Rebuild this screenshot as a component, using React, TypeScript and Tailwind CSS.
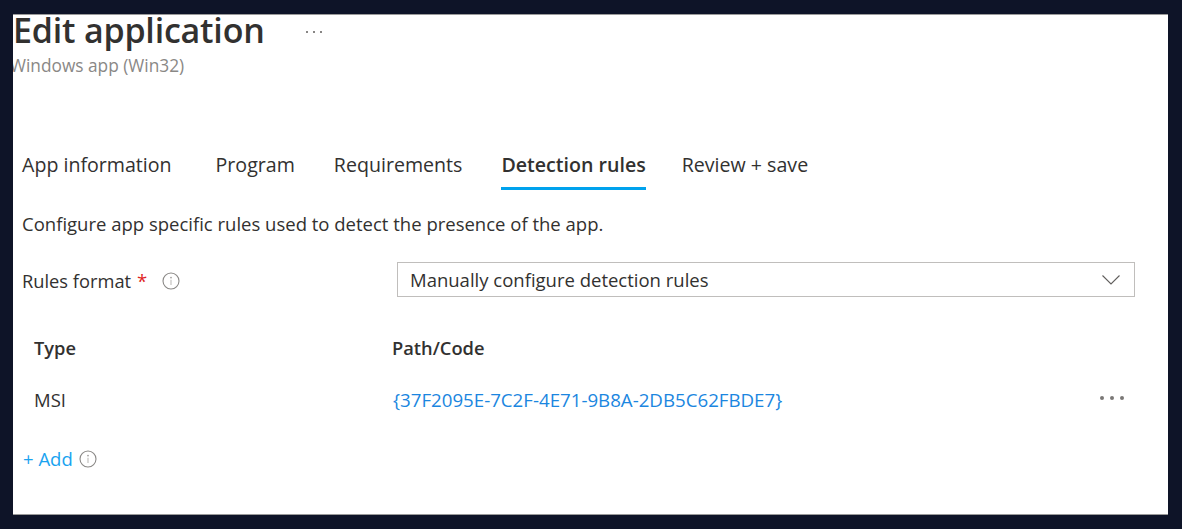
const font = { fontFamily: '"Open Sans", "Noto Sans", sans-serif' };

// tab label + left spacing before it
const tabs: [string, string][] = [
  ["App information", "ml-0"],
  ["Program", "ml-[44px]"],
  ["Requirements", "ml-[39px]"],
  ["Detection rules", "ml-[39px]"],
  ["Review + save", "ml-[36px]"],
];

function InfoIcon({ className = "" }: { className?: string }) {
  return (
    <svg viewBox="0 0 18 18" className={className} fill="none">
      <circle cx="9" cy="9" r="8" stroke="#8a8886" strokeWidth="1.1" />
      <circle cx="9" cy="5.6" r="0.9" fill="#a19f9d" />
      <path d="M9 7.8v5.2" stroke="#c8c6c4" strokeWidth="1.3" />
    </svg>
  );
}

function Dots({ size, gap, color }: { size: string; gap: string; color: string }) {
  return (
    <span className={"flex items-center " + gap}>
      <span className={size + " rounded-full " + color} />
      <span className={size + " rounded-full " + color} />
      <span className={size + " rounded-full " + color} />
    </span>
  );
}

export default function App() {
  return (
    <div className="min-h-[529px] bg-[#0e1428] pt-[14px] pl-[13px]" style={font}>
      <div className="w-[1155px] h-[501px] overflow-hidden bg-white border-t border-b border-[#9a9a9a] text-[#323130]">
        {/* header */}
        <div className="flex items-start h-[40px]">
          <h1 className="-mt-[3px] text-[34px] leading-[36px] font-semibold tracking-[-0.2px] whitespace-nowrap">
            Edit application
          </h1>
          <span className="ml-[41px] mt-[16px]">
            <Dots size="w-[2px] h-[2px]" gap="gap-[5px]" color="bg-[#605e5c]" />
          </span>
        </div>
        <div className="-ml-[3px] text-[17.3px] leading-[22px] text-[#8a8886] whitespace-nowrap">Windows app (Win32)</div>

        {/* wizard tabs */}
        <div className="mt-[73px] flex pl-[9px]">
          {tabs.map(([t, ml]) => {
            const active = t === "Detection rules";
            return (
              <div key={t} className={"flex flex-col " + ml}>
                <span className={"text-[19.6px] leading-[30px] whitespace-nowrap " + (active ? "font-semibold" : "")}>
                  {t}
                </span>
                <span className={"mt-[7px] h-[3px] " + (active ? "bg-[#00a2ed]" : "bg-transparent")} />
              </div>
            );
          })}
        </div>

        <p className="mt-[21px] pl-[9px] text-[18.5px] leading-[26px]">
          Configure app specific rules used to detect the presence of the app.
        </p>

        {/* rules format */}
        <div className="mt-[25px] flex items-center pl-[9px] h-[35px]">
          <div className="flex items-center w-[375px] pt-[2px]">
            <span className="text-[18.3px]">Rules format</span>
            <span className="ml-[6px] text-[18.5px] text-[#e02424]">*</span>
            <InfoIcon className="ml-[15px] w-[18px] h-[18px]" />
          </div>
          <div className="flex items-center justify-between w-[738px] h-[35px] border border-[#c0bebc] pl-[12px] pr-[14px]">
            <span className="text-[18.5px]">Manually configure detection rules</span>
            <svg viewBox="0 0 18 10" className="w-[18px] h-[10px]" fill="none">
              <path d="M0.5 0.5 9 9 17.5 0.5" stroke="#605e5c" strokeWidth="1.1" />
            </svg>
          </div>
        </div>

        {/* detection rules table */}
        <div className="mt-[38px] pl-[21px] pr-[44px]">
          <div className="flex h-[26px] items-center text-[18.3px] font-semibold">
            <span className="w-[358px]">Type</span>
            <span>Path/Code</span>
          </div>
          <div className="mt-[26px] flex h-[26px] items-center text-[18.5px]">
            <span className="w-[359px]">MSI</span>
            <span className="text-[#1b86e0] text-[18.7px] flex-1">{"{37F2095E-7C2F-4E71-9B8A-2DB5C62FBDE7}"}</span>
            <span className="-mt-[4px]">
              <Dots size="w-[4px] h-[4px]" gap="gap-[6px]" color="bg-[#7a7876]" />
            </span>
          </div>
        </div>

        <div className="mt-[33px] pl-[10px] flex items-center h-[26px]">
          <span className="text-[18.5px] text-[#1aa3f0]">+ Add</span>
          <InfoIcon className="ml-[6px] w-[18px] h-[18px]" />
        </div>
      </div>
    </div>
  );
}
